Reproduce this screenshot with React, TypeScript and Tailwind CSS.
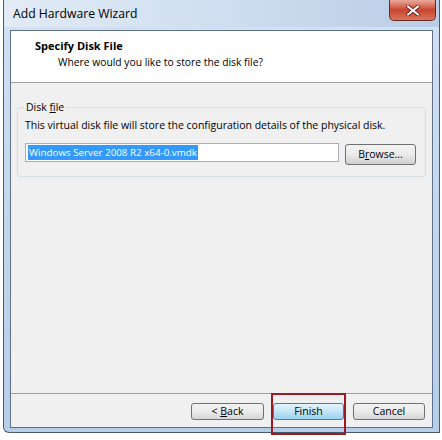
import React from "react";

export default function App() {
  const font = { fontFamily: '"Open Sans", "Noto Sans", "Liberation Sans", sans-serif' };
  return (
    <div className="w-[442px] h-[440px] bg-white overflow-hidden" style={font}>
      <div className="ml-[3px] w-[437px] h-[433px] flex flex-col border-l border-b border-r border-[#4a5a6e] rounded-bl-[6px] bg-gradient-to-b from-[#d3e2f3] via-[#c2d6ee] to-[#b6cde8]">
        {/* title bar */}
        <div className="h-[27px] flex items-start relative bg-gradient-to-r from-[#e2ebf6] via-[#cfdef0] to-[#b9cde6]">
          <div className="pl-[9px] pt-[6px] text-[12.2px] leading-[16px] text-black">Add Hardware Wizard</div>
          <div className="ml-auto mr-[3px] w-[47px] h-[21px] rounded-b-[5px] border border-t-0 border-[#6b2a20] bg-gradient-to-b from-[#e9a99c] via-[#c8432d] to-[#d9735c] flex items-center justify-center">
            <svg width="14" height="11" viewBox="0 0 14 11">
              <path d="M2 1.5 L12 9.5 M12 1.5 L2 9.5" stroke="#5a1a12" strokeWidth="3.6" strokeLinecap="round" />
              <path d="M2 1.5 L12 9.5 M12 1.5 L2 9.5" stroke="#ffffff" strokeWidth="2.2" strokeLinecap="round" />
            </svg>
          </div>
        </div>
        {/* client area */}
        <div className="ml-[6px] mr-[6px] mt-[3px] h-[398px] border border-[#5f7186] bg-[#f0f0f0] flex flex-col">
          {/* header */}
          <div className="h-[52px] bg-white border-b border-[#a0a0a0] pl-[24px] pt-[7px]">
            <div className="text-[11px] leading-[16px] font-bold text-black">Specify Disk File</div>
            <div className="pl-[23px] text-[10.3px] leading-[17px] text-black">Where would you like to store the disk file?</div>
          </div>
          {/* body */}
          <div className="px-[6px] pt-[24px] flex-1">
            <div className="relative border border-[#d5dfe5] rounded-[3px] h-[70px] pl-[7px] pr-[8px] pt-[9px]">
              <div className="absolute left-[6px] top-[-9px] bg-[#f0f0f0] px-[2px] text-[10.5px] leading-[16px] text-black">
                Disk <span className="underline">f</span>ile
              </div>
              <div className="text-[10.5px] leading-[16px] text-black whitespace-nowrap">This virtual disk file will store the configuration details of the physical disk.</div>
              <div className="flex items-start mt-[10px]">
                <div className="w-[314px] h-[19px] border border-[#abadb3] bg-white flex items-center pl-[2px]">
                  <span className="bg-[#3399ff] text-white text-[9.8px] leading-[15px] px-[1px]">Windows Server 2008 R2 x64-0.vmdk</span>
                </div>
                <div className="ml-[6px] mt-[1px] w-[71px] h-[21px] border border-[#707070] rounded-[3px] bg-gradient-to-b from-[#f2f2f2] via-[#ebebeb] to-[#cfcfcf] flex items-center justify-center text-[10.5px] text-black">
                  <span>B<span className="underline">r</span>owse...</span>
                </div>
              </div>
            </div>
          </div>
          {/* footer */}
          <div className="border-t border-[#a0a0a0] h-[34px] flex items-start justify-end pr-[7px] pt-[9px] gap-[9px] relative">
            <div className="w-[73px] h-[17px] border border-[#707070] rounded-[3px] bg-gradient-to-b from-[#f2f2f2] via-[#ebebeb] to-[#d5d5d5] flex items-center justify-center text-[10.5px] text-black leading-none">
              <span>&lt; <span className="underline">B</span>ack</span>
            </div>
            <div className="relative">
              <div className="w-[71px] h-[17px] border border-[#3c7fb1] rounded-[3px] bg-gradient-to-b from-[#e5f4fc] via-[#c4e5f6] to-[#98d1ef] flex items-center justify-center text-[10.5px] text-black leading-none">
                Finish
              </div>
              <div className="absolute left-[-2px] top-[-10px] w-[75px] h-[42px] border-2 border-[#9b1b22] pointer-events-none" />
            </div>
            <div className="w-[72px] h-[17px] border border-[#707070] rounded-[3px] bg-gradient-to-b from-[#f2f2f2] via-[#ebebeb] to-[#d5d5d5] flex items-center justify-center text-[10.5px] text-black leading-none">
              Cancel
            </div>
          </div>
        </div>
      </div>
    </div>
  );
}
